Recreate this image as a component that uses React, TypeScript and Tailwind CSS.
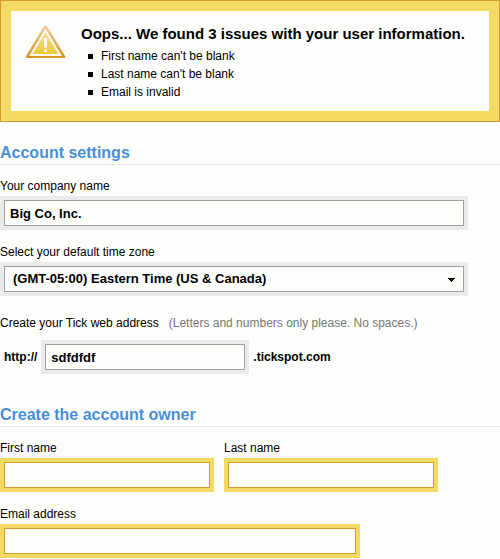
import type { ComponentProps, ReactNode } from "react";

const issues = ["First name can't be blank", "Last name can't be blank", "Email is invalid"];

function WarningIcon() {
  return (
    <svg width="40" height="34" viewBox="0 0 40 34" aria-hidden="true" className="shrink-0">
      <defs>
        <linearGradient id="rim" x1="0" y1="0" x2="0" y2="1">
          <stop offset="0" stopColor="#edcba2" />
          <stop offset="0.6" stopColor="#e3ab55" />
          <stop offset="1" stopColor="#dc9420" />
        </linearGradient>
        <linearGradient id="core" x1="0" y1="0" x2="0" y2="1">
          <stop offset="0" stopColor="#f1dd94" />
          <stop offset="1" stopColor="#edc93c" />
        </linearGradient>
      </defs>
      <path d="M19 1h3l18 30v2H1v-2z" fill="url(#rim)" />
      <path d="M20.500 3.800L36.800 31H4.200z" fill="#fdfefc" />
      <path d="M20.500 7.500L33.500 29h-26z" fill="url(#core)" />
      <path d="M18.800 13h3.400l-.5 10h-2.400z" fill="#fdfefc" />
      <rect x="19" y="24.500" width="3" height="2.500" rx="1" fill="#fdfefc" />
    </svg>
  );
}

function SectionTitle({ children }: { children: ReactNode }) {
  return (
    <h2 className="border-b border-[#e8e8e8] pb-px text-base/[21px] font-bold text-[#4a8edb]">{children}</h2>
  );
}

type FieldProps = ComponentProps<"input"> & { invalid?: boolean };

function TextField({ invalid, ...props }: FieldProps) {
  return (
    <div className={invalid ? "bg-[#f3da62] p-1" : "bg-[#ebeaec] p-1"}>
      <input
        type="text"
        aria-invalid={invalid}
        className={
          "block h-[26px] w-full border bg-[#fdfefc] px-[5px] text-[13px] font-bold text-black outline-none " +
          (invalid ? "border-[#d89b32]" : "border-[#a0a09c]")
        }
        {...props}
      />
    </div>
  );
}

export default function App() {
  return (
    <main className="bg-[#fdfefc] pb-px font-['Liberation_Sans',Arial,sans-serif] text-xs/4 text-black">
      <section role="alert" className="border border-[#d89b32] bg-[#f3da62] p-2.5">
        <div className="flex gap-4 bg-[#fdfefc] pt-3.5 pb-2.5 pl-[14px]">
          <WarningIcon />
          <div>
            <h1 className="text-[15px]/[18px] font-bold">Oops... We found 3 issues with your user information.</h1>
            <ul className="pt-1">
              {issues.map((issue) => (
                <li key={issue} className="flex items-center gap-2 pl-[7px] leading-[18px]">
                  <span className="size-[5px] bg-black" />
                  {issue}
                </li>
              ))}
            </ul>
          </div>
        </div>
      </section>

      <form>
        <div className="pt-5">
          <SectionTitle>Account settings</SectionTitle>
        </div>
        <div className="flex max-w-[468px] flex-col gap-0.5 pt-[13px]">
          <label htmlFor="company">Your company name</label>
          <TextField id="company" defaultValue="Big Co, Inc." />
        </div>
        <div className="flex max-w-[468px] flex-col gap-0.5 pt-3.5">
          <label htmlFor="zone">Select your default time zone</label>
          <div className="relative bg-[#ebeaec] p-1">
            <select
              id="zone"
              className="block h-[26px] w-full appearance-none border border-[#a0a09c] bg-[#fdfefc] px-2 text-[13px] font-bold text-black outline-none"
            >
              <option>(GMT-05:00) Eastern Time (US &amp; Canada)</option>
            </select>
            <svg
              width="7"
              height="4"
              viewBox="0 0 7 4"
              aria-hidden="true"
              className="pointer-events-none absolute top-4 right-[13px]"
            >
              <path d="M0 0h7v1H6v1H5v1H4v1H3V3H2V2H1V1H0z" />
            </svg>
          </div>
        </div>
        <div className="flex gap-2.5 pt-[19px]">
          <label htmlFor="address">Create your Tick web address</label>
          <span className="text-[#777777]">(Letters and numbers only please. No spaces.)</span>
        </div>
        <div className="flex items-center gap-1 pt-[9px] pl-1 font-bold">
          <span>http://</span>
          <div className="w-52">
            <TextField id="address" defaultValue="sdfdfdf" />
          </div>
          <span>.tickspot.com</span>
        </div>

        <div className="pt-[30px]">
          <SectionTitle>Create the account owner</SectionTitle>
        </div>
        <div className="grid max-w-[438px] grid-cols-2 gap-2.5 pt-[13px]">
          <div className="flex flex-col gap-0.5">
            <label htmlFor="first">First name</label>
            <TextField id="first" invalid />
          </div>
          <div className="flex flex-col gap-0.5">
            <label htmlFor="last">Last name</label>
            <TextField id="last" invalid />
          </div>
        </div>
        <div className="flex max-w-[360px] flex-col gap-0.5 pt-3.5">
          <label htmlFor="email">Email address</label>
          <TextField id="email" invalid />
        </div>
      </form>
    </main>
  );
}
